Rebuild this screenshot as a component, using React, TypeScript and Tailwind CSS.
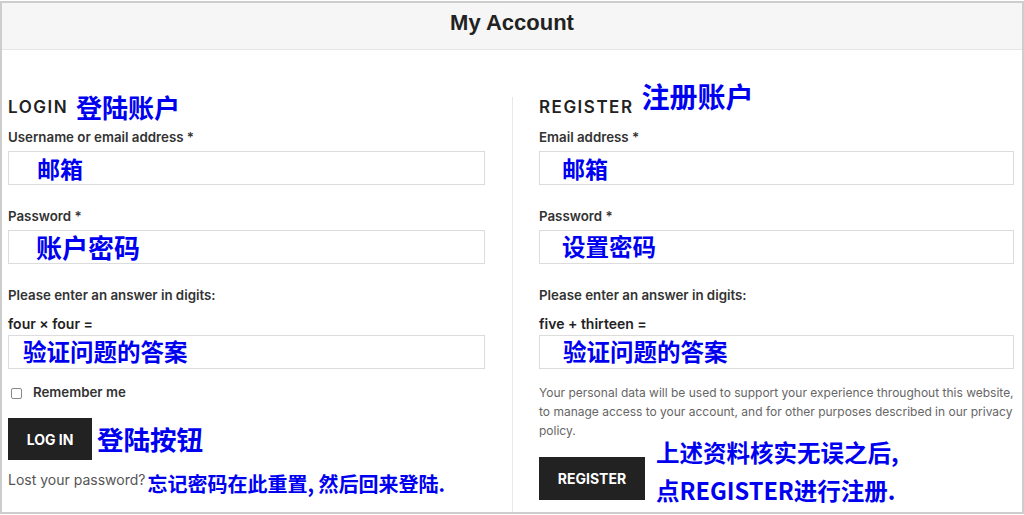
import React from "react";

const cn = "font-['Noto_Sans_CJK_SC',sans-serif] font-bold text-[#0000f0]";

const Field = ({ label, note, pad }: { label: string; note: string; pad: string }) => (
  <div>
    <div className="h-4 text-[13.3px] font-semibold leading-4 text-[#333]">{label}</div>
    <div className={`mt-[6px] flex h-[34px] items-center border border-[#dcdcdc] ${pad}`}>
      <span className={`${cn} leading-none`}>{note}</span>
    </div>
  </div>
);

const Captcha = ({ question, pad }: { question: string; pad: string }) => (
  <div className="mt-[23px]">
    <div className="h-4 text-[13.3px] font-semibold leading-4 text-[#333]">
      Please enter an answer in digits:
    </div>
    <div className="mt-[13px] h-4 text-[14px] font-semibold leading-4 text-[#222]">{question}</div>
    <div className={`mt-[3px] flex h-[34px] items-center border border-[#dcdcdc] ${pad}`}>
      <span className={`${cn} text-[23.5px] leading-none`}>验证问题的答案</span>
    </div>
  </div>
);

export default function App() {
  return (
    <div className="h-[515px] w-[1024px] overflow-hidden bg-white pt-[1px] font-['Inter',sans-serif]">
      <div className="flex h-[513px] flex-col border-2 border-[#cdcdcd]">
        {/* header */}
        <div className="flex h-[47px] shrink-0 items-center justify-center border-b border-[#e6e6e6] bg-[#f6f6f6] pb-[7px]">
          <h1 className="font-['Liberation_Sans',sans-serif] text-[22px] font-bold text-[#222]">My Account</h1>
        </div>

        <div className="flex flex-1 pl-[6px] pr-[8px]">
          {/* login */}
          <div className="w-[477px] pt-[43px]">
            <div className="flex h-[30px] items-center gap-[8px]">
              <span className="text-[17px] font-semibold tracking-[1.5px] text-[#222]">LOGIN</span>
              <span className={`${cn} -mt-[3px] text-[26px] leading-none`}>登陆账户</span>
            </div>
            <div className="mt-[6px]">
              <Field label="Username or email address *" note="邮箱" pad="pl-[28px] text-[23px]" />
            </div>
            <div className="mt-[23px]">
              <Field label="Password *" note="账户密码" pad="pl-[27px] text-[26px]" />
            </div>
            <Captcha question="four × four =" pad="pl-[14px]" />
            <div className="mt-[16px] flex h-4 items-center">
              <span className="ml-[3px] h-[11px] w-[11px] rounded-[2px] border border-[#888]" />
              <span className="ml-[11px] text-[13.3px] font-semibold text-[#333]">Remember me</span>
            </div>
            <div className="mt-[17px] flex items-center">
              <button className="h-[42px] w-[84px] bg-[#222] text-[14px] font-bold text-white">LOG IN</button>
              <span className={`${cn} ml-[5px] mt-[1px] text-[26.5px] leading-none`}>登陆按钮</span>
            </div>
            <div className="mt-[12px] flex items-start">
              <span className="text-[14px] leading-4 text-[#555]">Lost your password?</span>
              <span className={`${cn} ml-[2px] mt-[2px] text-[20px] leading-5`}>忘记密码在此重置, 然后回来登陆.</span>
            </div>
          </div>

          {/* divider */}
          <div className="ml-[27px] mr-[26px] mt-[47px] w-px bg-[#e8e8e8]" />

          {/* register */}
          <div className="w-[475px] pt-[43px]">
            <div className="flex h-[30px] items-center gap-[8px]">
              <span className="text-[17px] font-semibold tracking-[1.5px] text-[#222]">REGISTER</span>
              <span className={`${cn} relative -top-[12px] text-[28px] leading-none`}>注册账户</span>
            </div>
            <div className="mt-[6px]">
              <Field label="Email address *" note="邮箱" pad="pl-[22px] text-[23px]" />
            </div>
            <div className="mt-[23px]">
              <Field label="Password *" note="设置密码" pad="pl-[22px] text-[23.5px]" />
            </div>
            <Captcha question="five + thirteen =" pad="pl-[23px]" />
            <p className="mt-[14px] text-[12px] leading-[19px] text-[#666]">
              Your personal data will be used to support your experience throughout this website, to manage
              access to your account, and for other purposes described in our privacy policy.
            </p>
            <div className="-mt-[11px] flex items-start">
              <button className="mt-[28px] h-[43px] w-[106px] bg-[#222] text-[14px] font-bold text-white">
                REGISTER
              </button>
              <div className={`${cn} ml-[11px] mt-[13px] flex flex-col gap-[18px] text-[23.5px] leading-[20px]`}>
                <div>上述资料核实无误之后,</div>
                <div>点REGISTER进行注册.</div>
              </div>
            </div>
          </div>
        </div>
      </div>
    </div>
  );
}
